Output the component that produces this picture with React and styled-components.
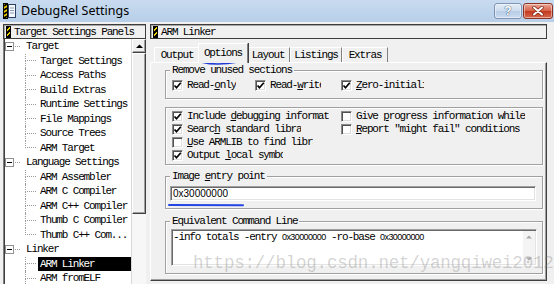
import React from 'react'
import styled, { createGlobalStyle } from 'styled-components'

const MONO = `"Liberation Mono", "DejaVu Sans Mono", monospace`;
const SANS = `"Liberation Sans", Arial, sans-serif`;

const GlobalStyle = createGlobalStyle`
  html, body {
    margin: 0;
    padding: 0;
    background: #f0f0f0;
  }
`;

const Window = styled.div`
  position: relative;
  width: 554px;
  height: 284px;
  overflow: hidden;
  background: #f0f0f0;
  font-family: ${MONO};
  font-size: 11px;
  letter-spacing: -1.15px;
  color: #000;
`;

const TitleBar = styled.div`
  height: 22px;
  box-sizing: border-box;
  display: flex;
  align-items: flex-start;
  padding: 3px 1px 0 3px;
  background: linear-gradient(#c8dbf0, #b8cfe9);
  letter-spacing: 0;
`;

const Title = styled.span`
  flex: 1;
  margin-left: 5px;
  line-height: 16px;
  font-family: "Noto Sans", ${SANS};
  font-size: 12.5px;
  color: #000;
`;

const CapButtons = styled.div`
  display: flex;
  gap: 1px;
`;

const CapButton = styled.div`
  width: ${p => p.$w}px;
  height: 16px;
  box-sizing: border-box;
  border-radius: 3px;
  border: 1px solid ${p => (p.$close ? '#8a3324' : '#7f95b3')};
  box-shadow: inset 0 0 0 1px rgba(255, 255, 255, 0.45);
  background: ${p =>
    p.$close
      ? 'linear-gradient(#e9a797, #d8644b 48%, #c3391d 52%, #d66a4e)'
      : 'linear-gradient(#e3ecf6, #cddcee 48%, #b9cde6 52%, #cbdbee)'};
  display: flex;
  align-items: center;
  justify-content: center;
`;

const HelpGlyph = styled.span`
  font-family: ${SANS};
  font-weight: bold;
  font-size: 12px;
  color: #fff;
  text-shadow: 0 0 1px #34507a, 0 0 1px #34507a;
`;

const Body = styled.div`
  display: flex;
  gap: 4px;
  padding: 2px 7px 0 3px;
  height: 262px;
`;

const LeftCol = styled.div`
  width: 143px;
  display: flex;
  flex-direction: column;
`;

const RightCol = styled.div`
  flex: 1;
  display: flex;
  flex-direction: column;
`;

const PaneHeader = styled.div`
  height: 15px;
  box-sizing: border-box;
  flex: none;
  display: flex;
  align-items: center;
  gap: 3px;
  padding-left: 2px;
  border: 1px solid #3c3c3c;
  box-shadow: inset 1px 1px 0 #a8a8a8;
`;

const Stripe = styled.span`
  width: 3px;
  height: 10px;
  flex: none;
  border: 1px solid #000;
  background: repeating-linear-gradient(135deg, #000 0 1.5px, #f2cf00 1.5px 3.5px);
`;

const Tree = styled.div`
  flex: 1;
  display: flex;
  min-height: 0;
  background: #fff;
  border-left: 1px solid #808080;
  box-shadow: inset 1px 0 0 #404040;
`;

const TreeList = styled.div`
  flex: 1;
  overflow: hidden;
  padding-left: 1px;
`;

const Row = styled.div`
  height: 14.5px;
  display: flex;
  align-items: stretch;
  white-space: nowrap;
`;

const Expander = styled.span`
  width: 9px;
  height: 9px;
  box-sizing: border-box;
  align-self: center;
  flex: none;
  border: 1px solid #919191;
  background: #fff;
  display: flex;
  align-items: center;
  justify-content: center;
  &::after {
    content: '';
    width: 5px;
    height: 1px;
    background: #000;
  }
`;

const Stub = styled.span`
  width: 5px;
  align-self: center;
  margin-left: 1px;
  border-top: 1px dotted #9a9a9a;
`;

const ParentText = styled.span`
  margin-left: 6px;
  line-height: 14.5px;
`;

const Branch = styled.span`
  width: 11px;
  flex: none;
  margin-left: 20px;
  display: flex;
  flex-direction: column;
`;

const BranchTop = styled.span`
  flex: 1;
  border-left: 1px dotted #9a9a9a;
  border-bottom: 1px dotted #9a9a9a;
`;

const BranchBottom = styled.span`
  flex: 1;
  border-left: 1px dotted ${p => (p.$last ? 'transparent' : '#9a9a9a')};
`;

const NodeText = styled.span`
  flex: 1;
  margin-left: 2px;
  padding-left: 2px;
  line-height: 14.5px;
  background: ${p => (p.$selected ? '#000' : 'transparent')};
  color: ${p => (p.$selected ? '#fff' : '#000')};
`;

const VScroll = styled.div`
  width: 14px;
  flex: none;
  display: flex;
  flex-direction: column;
  background: #f7f7f7;
  border-left: 1px solid #d8d8d8;
`;

const Raised = styled.div`
  height: ${p => p.$h}px;
  box-sizing: border-box;
  flex: none;
  background: #f0f0f0;
  border: 1px solid;
  border-color: #fff #404040 #404040 #fff;
  box-shadow: inset -1px -1px 0 #a0a0a0;
  display: flex;
  align-items: center;
  justify-content: center;
`;

const TabRow = styled.div`
  height: 23px;
  flex: none;
  display: flex;
  align-items: flex-end;
  padding-left: 4px;
`;

const Tab = styled.div`
  width: ${p => p.$w}px;
  height: ${p => (p.$active ? 20 : 15)}px;
  box-sizing: border-box;
  margin: 0 ${p => (p.$active ? -2 : 0)}px ${p => (p.$active ? -1 : 0)}px;
  position: relative;
  z-index: ${p => (p.$active ? 1 : 0)};
  display: flex;
  align-items: center;
  justify-content: center;
  padding-bottom: ${p => (p.$active ? 1 : 0)}px;
  background: #f0f0f0;
  border-top: 1px solid #fff;
  border-left: 1px solid #fff;
  border-right: 1px solid #808080;
  box-shadow: ${p => (p.$active ? '1px 0 0 #404040' : 'none')};
`;

const TabPanel = styled.div`
  height: 219px;
  box-sizing: border-box;
  display: flex;
  flex-direction: column;
  padding: 7px 3px 0 14px;
  border: 1px solid;
  border-color: #fff #404040 #404040 #fff;
  box-shadow: inset -1px -1px 0 #a0a0a0;
`;

const GroupBox = styled.div`
  height: ${p => p.$h}px;
  margin-top: ${p => p.$mt || 0}px;
  box-sizing: border-box;
  flex: none;
  border: 1px solid #a0a0a0;
  box-shadow: inset 1px 1px 0 #fff, 1px 1px 0 #fff;
  display: flex;
  flex-direction: column;
`;

const Caption = styled.span`
  height: 12px;
  line-height: 12px;
  margin: -7px 0 0 4px;
  padding: 0 2px;
  width: fit-content;
  background: #f0f0f0;
`;

const CheckLine = styled.div`
  display: flex;
  margin-top: ${p => p.$mt || 0}px;
  padding-left: 6px;
`;

const CheckColumn = styled.div`
  width: ${p => p.$w || 'auto'};
  display: flex;
  flex-direction: column;
`;

const CheckItem = styled.label`
  width: ${p => (p.$w ? `${p.$w}px` : 'auto')};
  height: 13px;
  flex: none;
  display: flex;
  align-items: center;
  gap: 4px;
`;

const Box = styled.span`
  width: 11px;
  height: 11px;
  box-sizing: border-box;
  flex: none;
  background: #fff;
  border: 1px solid;
  border-color: #8a8a8a #fff #fff #8a8a8a;
  box-shadow: inset 1px 1px 0 #505050, inset -1px -1px 0 #dcdcdc;
  display: flex;
  align-items: center;
  justify-content: center;
`;

const CheckText = styled.span`
  max-width: ${p => (p.$clip ? `${p.$clip}px` : 'none')};
  overflow: hidden;
  white-space: nowrap;
  line-height: 13px;
`;

const Key = styled.span`
  text-decoration: underline;
  text-underline-offset: 1px;
`;

const Sunken = styled.div`
  box-sizing: border-box;
  background: #fff;
  border: 1px solid;
  border-color: #a0a0a0 #fff #fff #a0a0a0;
  box-shadow: inset 1px 1px 0 #696969, inset -1px -1px 0 #e3e3e3;
`;

const EntryField = styled(Sunken)`
  height: 15px;
  margin: 4px 6px 0 4px;
  padding-left: 2px;
  display: flex;
  align-items: center;
  font-family: ${SANS};
  font-size: 10px;
  letter-spacing: 0;
`;

const CmdBox = styled(Sunken)`
  height: 37px;
  margin: 2px 5px 0 5px;
  display: flex;
`;

const CmdText = styled.div`
  flex: 1;
  padding: 1px 0 0 1px;
  line-height: 12px;
  white-space: nowrap;
  overflow: hidden;
`;

const Num = styled.span`
  font-family: ${SANS};
  font-size: 9px;
  letter-spacing: -0.6px;
`;

const CmdScroll = styled.div`
  width: 12px;
  display: flex;
  flex-direction: column;
  justify-content: space-between;
  align-items: center;
  padding: 4px 0 3px;
  margin: 1px 1px 1px 0;
  background: #f4f4f4;
`;

const Watermark = styled.div`
  position: absolute;
  left: 193px;
  top: 253px;
  font-family: ${MONO};
  font-size: 17.5px;
  line-height: 20px;
  letter-spacing: -0.2px;
  color: rgba(120, 120, 120, 0.32);
  white-space: nowrap;
  pointer-events: none;
`;

const Scribble = styled.svg`
  position: absolute;
  left: ${p => p.$x}px;
  top: ${p => p.$y}px;
  pointer-events: none;
`;

const Check = () => (
  <svg width="9" height="9" viewBox="0 0 9 9">
    <polyline points="1.5,4.5 3.5,6.8 7.8,1.8" fill="none" stroke="#000" strokeWidth="1.7" />
  </svg>
);

const CheckBox = ({ checked, w, clip, children }) => (
  <CheckItem $w={w}>
    <Box>{checked && <Check />}</Box>
    <CheckText $clip={clip}>{children}</CheckText>
  </CheckItem>
);

const AppIcon = () => (
  <svg width="13" height="16" viewBox="0 0 13 16">
    <rect x="0.5" y="0.5" width="4" height="15" fill="#f2cf00" stroke="#000" />
    <path d="M1 3 L4 1 M1 7 L4 5 M1 11 L4 9 M1 15 L4 13" stroke="#000" strokeWidth="1.6" />
    <rect x="5.5" y="1.5" width="7" height="13" fill="#f4f7fb" stroke="#2d3f63" />
    <path d="M7 5h4M7 7.5h4M7 10h4" stroke="#8a9ab5" />
  </svg>
);

const CloseGlyph = () => (
  <svg width="12" height="10" viewBox="0 0 12 10">
    <path d="M2 1.5 L10 8.5 M10 1.5 L2 8.5" stroke="#7a2415" strokeWidth="3.4" strokeLinecap="round" />
    <path d="M2 1.5 L10 8.5 M10 1.5 L2 8.5" stroke="#fff" strokeWidth="2" strokeLinecap="round" />
  </svg>
);

const UpArrow = ({ color = '#000', size = 7 }) => (
  <svg width={size} height={size / 2 + 1} viewBox="0 0 8 5">
    <polygon points="0,4.5 4,0.5 8,4.5" fill={color} />
  </svg>
);

const DownArrow = ({ color = '#000', size = 7 }) => (
  <svg width={size} height={size / 2 + 1} viewBox="0 0 8 5">
    <polygon points="0,0.5 4,4.5 8,0.5" fill={color} />
  </svg>
);

const tree = [
  {
    label: 'Target',
    children: ['Target Settings', 'Access Paths', 'Build Extras', 'Runtime Settings', 'File Mappings', 'Source Trees', 'ARM Target'],
  },
  {
    label: 'Language Settings',
    children: ['ARM Assembler', 'ARM C Compiler', 'ARM C++ Compiler', 'Thumb C Compiler', 'Thumb C++ Com...'],
  },
  {
    label: 'Linker',
    children: ['ARM Linker', 'ARM fromELF'],
  },
];

const tabs = [
  { label: 'Output', w: 46 },
  { label: 'Options', w: 50, active: true },
  { label: 'Layout', w: 44 },
  { label: 'Listings', w: 52 },
  { label: 'Extras', w: 46 },
];

export default function App() {
  return (
    <Window>
      <GlobalStyle />
      <TitleBar>
        <AppIcon />
        <Title>DebugRel Settings</Title>
        <CapButtons>
          <CapButton $w={28}>
            <HelpGlyph>?</HelpGlyph>
          </CapButton>
          <CapButton $w={30} $close>
            <CloseGlyph />
          </CapButton>
        </CapButtons>
      </TitleBar>

      <Body>
        <LeftCol>
          <PaneHeader>
            <Stripe />
            <span>Target Settings Panels</span>
          </PaneHeader>
          <Tree>
            <TreeList>
              {tree.map(node => (
                <React.Fragment key={node.label}>
                  <Row>
                    <Expander />
                    <Stub />
                    <ParentText>{node.label}</ParentText>
                  </Row>
                  {node.children.map((child, i) => (
                    <Row key={child}>
                      <Branch>
                        <BranchTop />
                        <BranchBottom $last={node.label !== 'Linker' && i === node.children.length - 1} />
                      </Branch>
                      <NodeText $selected={child === 'ARM Linker'}>{child}</NodeText>
                    </Row>
                  ))}
                </React.Fragment>
              ))}
            </TreeList>
            <VScroll>
              <Raised $h={14}>
                <UpArrow />
              </Raised>
              <Raised $h={161} />
            </VScroll>
          </Tree>
        </LeftCol>

        <RightCol>
          <PaneHeader>
            <Stripe />
            <span>ARM Linker</span>
          </PaneHeader>
          <TabRow>
            {tabs.map(t => (
              <Tab key={t.label} $w={t.w} $active={t.active}>
                {t.label}
              </Tab>
            ))}
          </TabRow>
          <TabPanel>
            <GroupBox $h={29}>
              <Caption>Remove unused sections</Caption>
              <CheckLine $mt={3}>
                <CheckBox checked w={83}>
                  Read-<Key>o</Key>nly
                </CheckBox>
                <CheckBox checked w={86} clip={51}>
                  Read-<Key>w</Key>rite
                </CheckBox>
                <CheckBox checked clip={68}>
                  <Key>Z</Key>ero-initialised
                </CheckBox>
              </CheckLine>
            </GroupBox>

            <GroupBox $h={58} $mt={8}>
              <CheckLine $mt={2}>
                <CheckColumn $w="169px">
                  <CheckBox checked clip={142}>
                    Include <Key>d</Key>ebugging information
                  </CheckBox>
                  <CheckBox checked clip={114}>
                    Searc<Key>h</Key> standard libraries
                  </CheckBox>
                  <CheckBox clip={126}>
                    <Key>U</Key>se ARMLIB to find libraries
                  </CheckBox>
                  <CheckBox checked clip={96}>
                    Output <Key>l</Key>ocal symbols
                  </CheckBox>
                </CheckColumn>
                <CheckColumn>
                  <CheckBox>
                    Give <Key>p</Key>rogress information while
                  </CheckBox>
                  <CheckBox>
                    <Key>R</Key>eport "might fail" conditions
                  </CheckBox>
                </CheckColumn>
              </CheckLine>
            </GroupBox>

            <GroupBox $h={33} $mt={11}>
              <Caption>
                Image <Key>e</Key>ntry point
              </Caption>
              <EntryField>0x30000000</EntryField>
            </GroupBox>

            <GroupBox $h={53} $mt={12}>
              <Caption>Equivalent Command Line</Caption>
              <CmdBox>
                <CmdText>
                  -info totals -entry <Num>0x30000000</Num> -ro-base <Num>0x30000000</Num>
                </CmdText>
                <CmdScroll>
                  <UpArrow color="#a8a8a8" size={6} />
                  <DownArrow color="#a8a8a8" size={6} />
                </CmdScroll>
              </CmdBox>
            </GroupBox>
          </TabPanel>
        </RightCol>
      </Body>

      <Scribble $x={201} $y={60} width="38" height="6" viewBox="0 0 38 6">
        <path d="M1 2.2 C10 4.6, 24 4.4, 37 2" fill="none" stroke="#1f3bd6" strokeWidth="1.4" strokeLinecap="round" />
      </Scribble>
      <Scribble $x={168} $y={203} width="76" height="4" viewBox="0 0 76 4">
        <path d="M1 2 L75 2.3" stroke="#2445e4" strokeWidth="2" strokeLinecap="round" />
      </Scribble>

      <Watermark>https://blog.csdn.net/yangqiwei2012</Watermark>
    </Window>
  );
}
